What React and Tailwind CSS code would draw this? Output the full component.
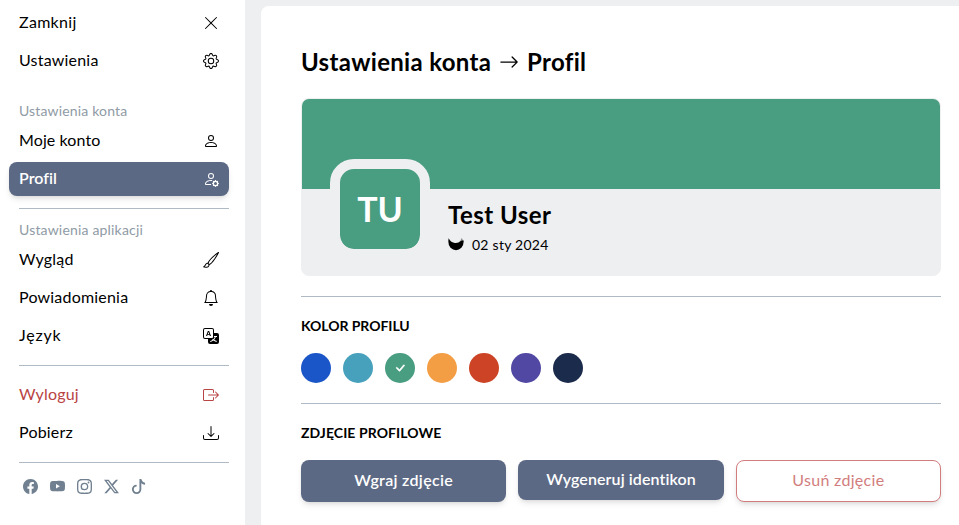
import {
  BsXLg, BsGear, BsPerson, BsPersonGear, BsBrush, BsBell, BsTranslate, BsBoxArrowRight,
  BsDownload, BsFacebook, BsYoutube, BsInstagram, BsTwitterX, BsTiktok, BsArrowRight, BsCheckLg,
} from "react-icons/bs";

function Item({ label, icon: Icon, track = "tracking-[0.2px]", className = "" }) {
  return (
    <a className={`flex h-[34px] items-center justify-between rounded-lg px-2.5 ${className}`}>
      <span className={`pb-0.5 ${track}`}>{label}</span>
      <Icon size={16} />
    </a>
  );
}

function Caption({ children, className }) {
  return <div className={`flex h-[26px] items-center pl-2.5 text-sm text-[#8f9ba5] ${className}`}>{children}</div>;
}

function Rule({ className = "" }) {
  return <div className={`h-px shrink-0 bg-[#b0bac5] ${className}`} />;
}

const colors = [
  "bg-[#1a56c7]", "bg-[#47a1bd]", "bg-[#499d80]", "bg-[#f39d44]",
  "bg-[#cc4425]", "bg-[#5148a3]", "bg-[#1b2b4b]",
];

function Sidebar() {
  return (
    <nav className="flex w-[245px] shrink-0 flex-col bg-white pt-1.5 pr-4 pl-[9px]">
      <div className="flex flex-col gap-1">
        <Item label="Zamknij" icon={BsXLg} track="tracking-[0.3px]" />
        <Item label="Ustawienia" icon={BsGear} />
      </div>
      <Caption className="mt-5 tracking-[0.16px]">Ustawienia konta</Caption>
      <div className="flex flex-col gap-1">
        <Item label="Moje konto" icon={BsPerson} track="tracking-[0.1px]" />
        <Item label="Profil" icon={BsPersonGear} className="bg-[#5c6984] font-semibold text-white shadow-md" track="tracking-[0.05px]" />
      </div>
      <Rule className="mt-3 ml-2.5" />
      <Caption className="mt-2 tracking-[0.18px]">Ustawienia aplikacji</Caption>
      <div className="flex flex-col gap-1">
        <Item label="Wygląd" icon={BsBrush} />
        <Item label="Powiadomienia" icon={BsBell} />
        <Item label="Język" icon={BsTranslate} track="tracking-[0.8px]" />
      </div>
      <Rule className="mt-3 ml-2.5" />
      <div className="mt-3 flex flex-col gap-1">
        <Item label="Wyloguj" icon={BsBoxArrowRight} className="text-[#b94444]" />
        <Item label="Pobierz" icon={BsDownload} />
      </div>
      <Rule className="mt-3 ml-2.5" />
      <div className="mt-4 ml-3.5 flex gap-3 text-[#708090]">
        <BsFacebook size={15} />
        <BsYoutube size={15} />
        <BsInstagram size={15} />
        <BsTwitterX size={15} />
        <BsTiktok size={15} />
      </div>
    </nav>
  );
}

export default function App() {
  return (
    <div className="flex h-[525px] w-[959px] overflow-hidden bg-[#edeff1] font-['Lato','Liberation_Sans',sans-serif] text-base text-black [font-variant-ligatures:none]">
      <Sidebar />
      <main className="mt-1.5 ml-4 flex flex-1 flex-col rounded-tl-lg bg-white pt-10 pr-[18px] pl-10">
        <h1 className="flex h-8 items-center text-2xl font-bold tracking-[0.32px]">
          <span className="w-[190px] whitespace-nowrap">Ustawienia konta</span>
          <BsArrowRight size={20} className="mr-2 ml-2" />
          <span>Profil</span>
        </h1>
        <section className="mt-5 h-[178px] w-[640px] overflow-hidden rounded-lg border border-[#edeff1] bg-[#edeff1]">
          <div className="h-[90px] bg-[#499d80]" />
          <div className="flex pl-7">
            <div className="relative -mt-[30px] flex size-[100px] shrink-0 items-center justify-center rounded-3xl border-[10px] border-[#edeff1] bg-[#499d80] bg-clip-padding pb-0.5 text-[34px] font-bold text-white">
              TU
            </div>
            <div className="ml-[18px] pt-2.5">
              <div className="text-2xl leading-8 font-bold tracking-[0.45px]">Test User</div>
              <div className="mt-1 flex h-5 items-center gap-2 text-sm tracking-[0.25px]">
                <svg width="16" height="16" viewBox="0 0 16 16">
                  <path d="M10 5.5 Q13 4 13.6 1 L15.6 4 L13.5 7Z" fill="#8e9091" />
                  <path d="M.6 1.3 Q3 5.8 7 6 Q11 6.2 13.2 3.8 L15.6 3.4 Q16 8 13.4 10.8 Q11 13.2 8 13.2 Q5 13.2 2.5 10.8 Q-.4 8 .6 1.3Z" />
                </svg>
                <span>02 sty 2024</span>
              </div>
            </div>
          </div>
        </section>
        <Rule className="mt-5" />
        <h2 className="mt-[19px] mb-px h-5 text-sm leading-5 font-bold tracking-[-0.05px]">KOLOR PROFILU</h2>
        <div className="mt-4 flex gap-3">
          {colors.map((c, i) => (
            <div key={c} className={`flex size-[30px] items-center justify-center rounded-full text-white ${c}`}>
              {i === 2 && <BsCheckLg size={12} className="overflow-visible stroke-white stroke-1" />}
            </div>
          ))}
        </div>
        <Rule className="mt-5" />
        <h2 className="mt-[19px] mb-px h-5 text-sm leading-5 font-bold tracking-[0.07px]">ZDJĘCIE PROFILOWE</h2>
        <div className="mt-4 grid grid-cols-3 items-start gap-3">
          <button className="h-[42px] rounded-lg bg-[#5c6984] pb-0.5 font-semibold tracking-[0.3px] text-white shadow-md">Wgraj zdjęcie</button>
          <button className="h-10 rounded-lg bg-[#5c6984] pb-0.5 font-semibold tracking-[0.1px] text-white shadow-md">Wygeneruj identikon</button>
          <button className="h-[42px] rounded-lg border border-[#d27d7d] bg-white pb-0.5 tracking-[0.3px] text-[#d27d7d] shadow-md">Usuń zdjęcie</button>
        </div>
      </main>
    </div>
  );
}
